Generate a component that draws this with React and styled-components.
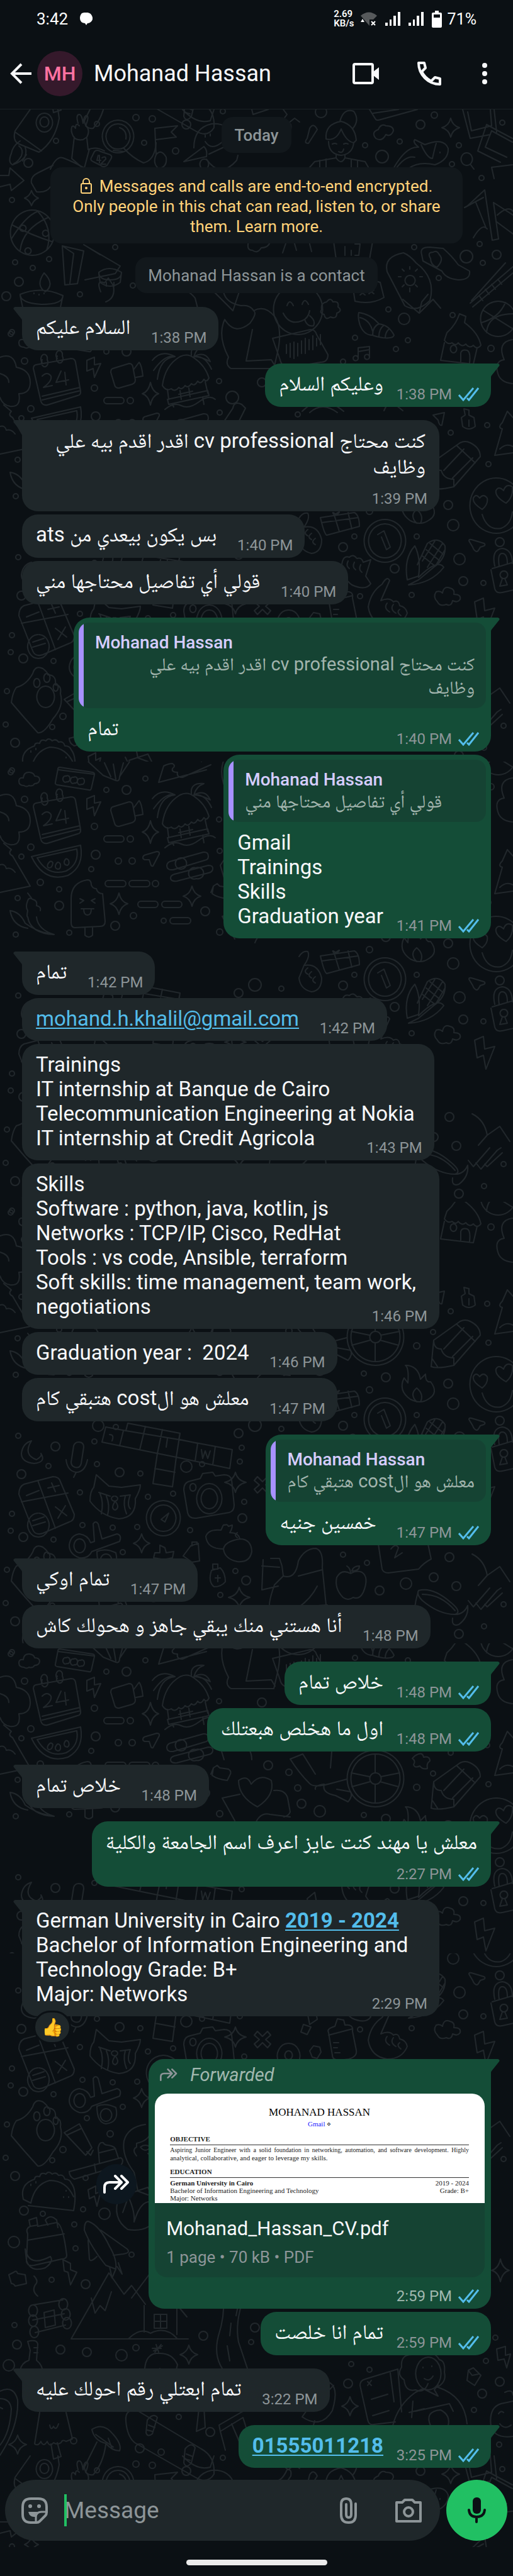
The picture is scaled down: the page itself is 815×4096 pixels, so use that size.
import React from "react";
import styled, { createGlobalStyle, css } from "styled-components";

const c = {
  bg: "#0b1014",
  line: "#21272b",
  incoming: "#1f272a",
  outgoing: "#144d37",
  quote: "#154333",
  text: "#f7f8fa",
  muted: "#8d9598",
  link: "#53bdeb",
  name: "#d6cdff",
  bar: "#a791ff",
  green: "#21c063",
  gold: "#ffd279",
};

const GlobalStyle = createGlobalStyle`
  * { box-sizing: border-box; }
  body { margin: 0; background: ${c.bg}; color: ${c.text}; }
  body, button, input {
    font-family: Roboto, "Noto Naskh Arabic", "Noto Sans Arabic", "DejaVu Sans", sans-serif;
  }
  button { border: 0; padding: 0; background: none; color: inherit; cursor: pointer; }
`;

/* ---------- page frame ---------- */

const Screen = styled.div`
  display: flex;
  flex-direction: column;
  min-height: 100vh;
`;

const StatusBar = styled.div`
  display: flex;
  align-items: center;
  height: 60px;
  padding: 0 58px;
  font-size: 25px;
  color: #fff;
`;

const Clock = styled.span`
  flex: 1;
  display: flex;
  align-items: center;
  gap: 18px;
  font-size: 26px;
`;

const NetSpeed = styled.span`
  font-size: 15px;
  line-height: 15px;
  font-weight: 600;
  margin-right: 10px;
`;

const StatusIcons = styled.span`
  display: flex;
  align-items: center;
  gap: 13px;
  margin-right: 9px;
`;

const Header = styled.header`
  display: flex;
  align-items: center;
  height: 114px;
  padding: 0 36px 0 16px;
  border-bottom: 1px solid #1b2225;
`;

const IconButton = styled.button`
  display: flex;
`;

const Avatar = styled.div`
  width: 72px;
  height: 72px;
  margin-left: 8px;
  border-radius: 50%;
  background: #35192b;
  color: #ff72a1;
  font-size: 32px;
  font-weight: 500;
  display: grid;
  place-items: center;
`;

const Title = styled.h1`
  flex: 1;
  margin: 0 0 0 18px;
  font-size: 36px;
  font-weight: 400;
`;

const HeaderActions = styled.div`
  display: flex;
  align-items: center;
  gap: 61px;
`;

const Chat = styled.main`
  position: relative;
  flex: 1;
  display: flex;
  flex-direction: column;
`;

const Backdrop = styled.svg`
  position: absolute;
  inset: 0;
  width: 100%;
  height: 100%;
`;

const Thread = styled.div`
  position: relative;
  flex: 1;
  display: flex;
  flex-direction: column;
  padding: 12px 35px 18px;
`;

/* ---------- notices ---------- */

const Notice = styled.p`
  align-self: center;
  margin: 0 0 22px;
  padding: 14px 20px 12px;
  border-radius: 18px;
  background: #12181c;
  color: ${c.muted};
  font-size: 26px;
  line-height: 31px;
  text-align: center;
  font-weight: ${(p) => (p.$strong ? 500 : 400)};
`;

const Encryption = styled(Notice)`
  align-self: stretch;
  margin: 1px 45px 22px;
  padding: 14px 28px 11px;
  line-height: 32px;
  color: ${c.gold};
  svg { vertical-align: -3px; margin-right: 12px; }
`;

/* ---------- messages ---------- */

const Row = styled.div`
  display: flex;
  align-items: center;
  gap: 19px;
  justify-content: ${(p) => (p.$out ? "flex-end" : "flex-start")};
  margin-top: ${(p) => (p.$first ? 21 : 5)}px;
  &:first-of-type { margin-top: 0; }
`;

const Bubble = styled.div`
  position: relative;
  max-width: 89%;
  border-radius: 25px;
  background: ${(p) => (p.$out ? c.outgoing : c.incoming)};
  ${(p) => p.$first && (p.$out ? css`border-top-right-radius: 0;` : css`border-top-left-radius: 0;`)}
  ${(p) => p.$wide && css`width: 73%;`}
`;

const TailSvg = styled.svg`
  position: absolute;
  top: 0;
  ${(p) => (p.$out ? css`right: -14px;` : css`left: -14px; transform: scaleX(-1);`)}
`;

const Content = styled.div`
  display: grid;
`;

const Text = styled.div`
  grid-area: 1 / 1;
  justify-self: start;
  padding: 13px ${(p) => (p.$roomy ? 31 : 22)}px 16px 22px;
  font-size: 33px;
  line-height: 39px;
  white-space: pre-wrap;
`;

const Arabic = styled(Text)`
  padding-top: 12px;
  padding-bottom: 17px;
  line-height: ${(p) => (p.$stack ? 41 : 40)}px;
`;

const Spacer = styled.span`
  display: inline-block;
  height: 1px;
  width: ${(p) => (p.$out ? 149 : 118)}px;
`;

const Stamp = styled.div`
  grid-area: ${(p) => (p.$stack ? "2 / 1" : "1 / 1")};
  place-self: end;
  display: flex;
  align-items: center;
  gap: 10px;
  padding: 0 19px 6px 0;
  font-size: 24px;
  line-height: 28px;
  color: ${(p) => (p.$bright ? "#a1b8af" : c.muted)};
`;

const QuoteWrap = styled.div`
  padding: 8px 8px 0;
`;

const Quote = styled.blockquote`
  margin: 0;
  display: flex;
  flex-direction: column;
  align-items: flex-start;
  padding: 15px 18px 14px 26px;
  border-radius: 16px;
  background: linear-gradient(to right, ${c.bar} 8px, ${c.quote} 8px);
  color: #a1b4ad;
  font-size: 29px;
  line-height: 37px;
`;

const QuoteName = styled.cite`
  font-style: normal;
  font-size: 28px;
  line-height: 33px;
  font-weight: 500;
  color: ${c.name};
`;

const QuoteText = styled.span`
  ${(p) => p.$long && css`padding-inline-end: 20px;`}
`;

const Link = styled.a`
  color: ${c.link};
  text-decoration: underline;
  text-decoration-thickness: 2px;
  text-underline-offset: 3px;
  font-weight: ${(p) => (p.$bold ? 700 : 400)};
`;

const Reaction = styled.div`
  position: relative;
  width: 60px;
  height: 53px;
  margin: -9px 0 3px 18px;
  border: 3px solid ${c.bg};
  border-radius: 27px;
  background: ${c.incoming};
  display: grid;
  place-items: center;
  font-size: 28px;
  line-height: 32px;
`;

/* ---------- document ---------- */

const Forwarded = styled.div`
  display: flex;
  align-items: center;
  gap: 20px;
  height: 55px;
  padding: 0 18px 5px;
  font-size: 29px;
  font-style: italic;
  color: #a1b8af;
`;

const DocCard = styled.div`
  margin: 0 10px;
  border-radius: 20px;
  overflow: hidden;
  background: ${c.quote};
`;

const Preview = styled.div`
  height: 174px;
  padding: 22px 25px 0 24px;
  background: #fff;
  color: #222;
  overflow: hidden;
  font-family: "Liberation Serif", serif;
  font-size: 11px;
  line-height: 12px;
`;

const PreviewName = styled.div`
  text-align: center;
  font-size: 17px;
  line-height: 16px;
  color: #000;
`;

const PreviewLink = styled.div`
  text-align: center;
  margin: 4px 0 12px;
  a { color: #1a1aff; text-decoration: none; }
`;

const PreviewHead = styled.div`
  font-weight: 700;
  line-height: 13px;
  padding-bottom: 2px;
  margin-bottom: 2px;
  border-bottom: 1px solid #333;
`;

const PreviewBody = styled.p`
  margin: 0 0 10px;
`;

const PreviewFullLine = styled.span`
  display: block;
  font-size: 10px;
  text-align-last: justify;
`;

const PreviewLine = styled.div`
  display: flex;
  justify-content: space-between;
`;

const DocInfo = styled.div`
  height: 118px;
  padding: 21px 18px 0;
`;

const FileName = styled.div`
  font-size: 31px;
  line-height: 39px;
`;

const FileMeta = styled.div`
  margin-top: 12px;
  font-size: 26px;
  line-height: 29px;
  color: ${c.muted};
`;

const DocStamp = styled(Content)`
  height: 50px;
`;

const ForwardButton = styled.button`
  width: 64px;
  height: 64px;
  border-radius: 50%;
  background: #0d171f;
  display: grid;
  place-items: center;
`;

/* ---------- composer ---------- */

const Composer = styled.form`
  position: relative;
  display: flex;
  gap: 10px;
  padding: 0 9px 10px 8px;
`;

const Field = styled.div`
  flex: 1;
  display: flex;
  align-items: center;
  height: 97px;
  padding: 0 29px 0 26px;
  border-radius: 49px;
  background: ${c.incoming};
`;

const InputWrap = styled.label`
  position: relative;
  flex: 1;
  display: flex;
  margin: 0 20px 0 26px;
  &::before {
    content: "";
    position: absolute;
    left: 0;
    top: -4px;
    width: 4px;
    height: 51px;
    background: ${c.green};
  }
`;

const Input = styled.input`
  width: 100%;
  height: 44px;
  padding: 0;
  border: 0;
  outline: 0;
  background: none;
  color: ${c.text};
  font-size: 37px;
  &::placeholder { color: ${c.muted}; opacity: 1; }
`;

const FieldIcons = styled.div`
  display: flex;
  align-items: center;
  gap: 61px;
`;

const MicButton = styled.button`
  width: 97px;
  height: 97px;
  border-radius: 50%;
  background: ${c.green};
  display: grid;
  place-items: center;
`;

const NavBar = styled.div`
  height: 46px;
  display: flex;
  justify-content: center;
  padding-top: 20px;
  &::after {
    content: "";
    width: 224px;
    height: 9px;
    border-radius: 5px;
    background: #ebebeb;
  }
`;

/* ---------- wallpaper ---------- */

const RINGS = [
  [17,17,4],[169,45,4],[201,45,7],[231,27,4],[39,60,5],[150,103,5],[49,136,5],[34,151,4],[152,148,7],[188,158,5],[210,158,5],[145,171,4],[64,192,5],[94,203,4],[247,194,5],[28,217,4],[94,229,7],[212,245,5],[183,261,7],[260,253,4],[326,238,7],[110,272,4],[25,275,4],[348,92,4],[207,123,5],[349,142,4],
  [662,229,5],[587,299,5],[613,279,7],[578,273,4],[712,289,7],[720,321,9],[794,348,7],[545,356,7],[563,339,4],[662,339,4],[447,361,4],[405,355,10],[379,368,7],[384,391,4],[156,356,9],[184,358,4],[29,372,4],[150,381,4],[88,389,7],[77,420,4],[34,433,7],[154,417,4],[190,430,7],[223,432,4],[296,421,9],[321,417,4],[381,413,4],[127,462,4],[19,496,4],[235,469,4],[275,464,4],[131,514,4],[179,518,4],[218,517,4],[37,533,7],[17,523,4],[85,537,4],[195,557,4],[302,522,4],[385,503,7],[388,477,4],[374,587,4],[391,602,7],[350,625,4],[11,585,4],[9,638,4],[545,561,4],[583,574,4],[603,618,7],[645,607,9],[689,597,7],[725,611,7],[714,565,7],[729,687,7],[769,675,4],[800,640,4],[688,207,4],[776,224,4],
  [369,118,10],[416,94,7],[629,41,4],[545,61,4],[473,145,4],[642,-7,9],[617,-22,4],[564,23,4],[719,-13,4],[648,27,4],[780,40,5],[774,162,4],[716,174,4],[627,390,7],[730,375,9],[736,410,7],[768,413,4],[572,434,4],[654,432,4],[426,194,7],[459,205,5],[473,230,5],[479,255,7],[508,267,9],[349,271,5],
  [100,625,5],[175,600,5],[138,575,4],[83,642,4],[24,667,7],[136,670,4],[38,722,7],[166,727,9],[132,720,4],[68,727,4],[118,744,4],[22,772,9],[120,782,4],[209,792,4],[82,832,4],[136,839,7],
  [96,943,7],[138,947,7],[193,952,9],[216,940,5],[27,935,7],[14,968,9],[23,904,4],[323,921,7],[399,931,4],[405,908,7],[284,1050,4],[334,1074,7],[222,1100,7],[117,1088,5],[256,1106,5],[354,1115,4],[553,997,7],[558,966,4],[587,975,4],[766,1013,7],[753,1039,4],[772,961,4],[794,994,7],[793,1094,4],[787,924,4],
  [216,-327,5],[242,-325,5],[296,-316,7],[154,-317,4],[89,-290,4],[229,-287,4],[279,-274,5],[690,-331,5],[668,-316,7],[580,-283,4],[635,-289,4],[607,-265,10],[729,-283,4],[798,-319,4],[718,-253,4],[45,-255,7],[765,-231,4],[19,-196,4],[78,-102,4],[24,-97,4],[52,-88,4],[30,-66,7],[10,-43,7],[127,-46,4],[183,-121,4],[658,-121,4],[789,-109,7],[741,-106,10],[767,-96,4],[762,-126,4],[697,-72,4],[211,-60,4],[19,14,4],[510,-336,9],
];

const STARS = [
  [239,112,13,18],[189,226,14,17],[305,214,14,16],[374,446,17,16],[225,543,13,15],[380,629,17,16],[795,817,14,18],[300,951,14,15],[28,1094,14,15],[556,1033,13,15],[716,-311,14,15],[50,-199,11,12],
];

const BARS = [
  [165,118,32,10],[167,189,33,10],[205,189,33,10],[219,222,32,10],[257,222,32,10],[270,248,33,10],
];

/* each entry: x, y, path drawn from that corner */
const SHAPES = [
  [53,52,"M4 14L60 4Q66 4 67 10L75 56Q76 62 70 63L22 78Q14 79 12 72L0 20Q0 15 4 14ZM14 64L74 50M14 70L75 55M14 6a5 7 0 1 0 8 0a5 7 0 1 0-8 4M38 0a5 7 0 1 0 8 0a5 7 0 1 0-8 4M14 32q8-8 14 0q2 8-12 18l14-3M44 24L36 42L56 38M50 26L52 46"],
  [136,54,"M2 5L14 0L14 12L24 10L14 32L12 18L2 22Z"],
  [175,62,"M4 10L30 2Q35 2 36 7L40 28Q40 33 35 35L14 41Q8 41 7 36L1 16Q1 11 4 10ZM37 12L46 0Q50 4 52 22L41 24"],
  [242,33,"M16 66Q20 34 44 20Q56 14 66 22Q84 34 90 54q-4 8-8 2q-5 9-10 3q-5 9-10 4q-5 8-10 3q-5 8-10 3q-6 8-12 2q-8 5-14-5ZM24 72L26 88M84 60L88 78M24 88L88 74L90 82L26 96ZM32 96L34 100M80 84L82 96M20 104Q34 92 46 98T74 92T100 88M44 74L46 88M58 70L60 84M42 80L64 75M0 26Q14 8 36 20Q20 16 2 42M62 18Q60 0 82 2Q70 6 66 20Q84 10 92 28Q78 20 66 20Q84 18 94 40M36 20Q12 22 8 56"],
  [50,133,"M0 18L78 0Q84 34 58 48Q20 60 0 18ZM9 20L72 6Q76 30 55 41Q26 50 9 20M26 30q5-8 8-2q-1 8-6 8q-4-1-2-6M38 32q4-9 8-2q1 8-4 8q-5-1-4-6M52 26q3-8 7-2q2 6-2 8q-6-1-5-6"],
  [227,143,"M0 10Q0 6 5 5L22 0Q27 0 26 4L16 23Q13 24 12 19L10 13L3 13Q0 12 0 10Z"],
  [265,143,"M8 15L58 1Q66 0 66 8Q66 13 60 14L10 29Q0 30 0 22Q1 16 8 15ZM12 36L66 22Q74 22 73 28Q72 33 66 34L16 47Q6 48 6 42Q6 38 12 36ZM22 10a9 9 0 1 0 1 18a9 9 0 1 0-1-18M46 26a9 9 0 1 0 1 17a9 9 0 1 0-1-17"],
  [113,188,"M0 30Q0 4 26 0Q32 0 32 8Q34 14 40 14Q42 22 50 22L54 66Q54 74 46 74L6 76Q0 76 0 68ZM22 76L22 88Q28 94 34 88L34 75M14 30l6 3l-6 4M38 30l-6 3l6 4M16 46h20M20 46q0 10 6 10t6-10"],
  [16,207,"M28 14Q30 8 36 12Q44 14 42 22Q50 24 48 30M28 14Q24 24 28 30Q26 40 28 40Q32 66 70 68Q44 60 42 40M28 2l6 8M0 30Q16 32 24 50Q40 62 60 66M0 30Q4 54 28 58"],
  [30,16,"M8 22Q0 22 0 15Q0 9 7 10Q8 0 17 1Q24 2 25 7Q33 7 33 13Q32 19 25 19Q22 24 16 22Q12 25 8 22Z"],
  [87,9,"M8 0L60 8Q64 9 63 12L58 34Q57 37 54 36L4 28Q0 27 1 24L5 3Q5 0 8 0ZM2 24M6 4L62 11M18 14a4 5 0 1 0 1 9a4 5 0 1 0-1-9M30 16a4 5 0 1 0 1 9a4 5 0 1 0-1-9M41 18a4 5 0 1 0 1 9a4 5 0 1 0-1-9"],
  [252,3,"M0 30L8 4Q16 0 22 0q6 4 0 8q-2 6 8 6q-2 8 8 8L83 2M0 30L76 10"],
  [140,0,"M0 0L24 22L44 30Q50 32 50 24L66 0M40 4L44 28M56 2L50 24M26 2L36 24"],
  [0,50,"M0 4Q22-4 26 20Q48 24 48 44Q48 62 30 62Q34 84 16 82Q4 80 0 68M0 30Q14 34 14 44"],
  [0,130,"M6 0L18 10Q12 16 20 20L48 68L0 78M0 34Q8 32 10 40Q18 38 24 46"],
  [162,352,"M41 0L124 16L122 26L207 42L203 72L118 54L112 101L81 96L88 48L0 30L6 6L38 12ZM69 5L60 42M96 10L88 48L118 54L124 16M34 12L28 36M124 26L152 32L148 60M180 37L176 66M38 12L122 26M84 72L116 78M12 18q8 0 4 10M104 24l-2 14M158 42l2 14l4-12l4 12l4-12"],
  [34,380,"M16 0Q2 22 24 30Q34 24 31 20Q40 34 20 36Q0 34 0 20Q2 4 16 0Z"],
  [105,382,"M12 6Q14 0 20 0Q28 0 28 8L24 34Q22 42 14 40Q8 38 8 32ZM0 28Q2 46 16 48Q30 48 34 28M16 48L12 56"],
  [30,437,"M8 12L54 0Q64 0 66 8L88 60Q88 70 80 72L38 90Q26 94 22 84L0 28Q0 16 8 12ZM30 6L58 82M4 40L78 26M12 30L32 22M46 18L64 14M52 10L58 24M58 48L76 62M74 46L62 66M30 58a17 19 0 1 0 2 0M22 70L40 64M22 78L42 72"],
  [143,434,"M10 0L30 18L50 20L80 16Q80 24 72 38Q74 68 46 70Q18 66 0 42Q0 26 6 20ZM14 28L32 34M48 34L64 32M16 30q6 14 2 32M26 34q6 14 2 30M56 34q-4 14 2 28M64 32q-6 16 0 22M38 34a5 4 0 1 0 2 0M40 42q-8 12 0 14q8-4 0-14"],
  [232,475,"M27 0a27 28 0 1 0 1 0M27 7a20 21 0 1 0 1 0M24 30L36 20L30 34Z"],
  [292,430,"M10 14L26 10L30 2L46 0L50 6L64 4Q74 4 76 12L80 52Q80 62 72 64L20 73Q8 74 6 64L0 28Q0 16 10 14ZM40 18a20 24 0 1 0 1 0M40 26a13 16 0 1 0 1 0M14 18a5 6 0 1 0 1 0"],
  [108,508,"M40 4Q44-2 48 4L54 28L78 20Q86 22 82 32L38 48Q32 60 18 58Q2 52 2 38Q4 22 18 20Q32 22 36 34L42 32ZM18 28a9 11 0 1 0 1 0M46 48Q60 42 76 50Q82 74 60 76Q46 74 46 48M60 52a9 10 0 1 0 1 0"],
  [327,508,"M26 10q2-6 4-4q4-2 6 2l6-2q0 6-4 12Q52 18 54 28Q72 28 73 48Q70 66 50 64Q30 60 28 44Q2 44 0 24Q4 12 24 14ZM50 26q-6-4 0-8M28 44Q30 32 54 28"],
  [332,576,"M6 0h8v8h-8ZM4 10L18 6Q26 14 26 28Q20 36 8 36Q-2 28 4 10M14 18v10M10 22h8"],
  [291,541,"M12 6L24 2L26 30L14 32L0 22ZM14 6v-6h8v4"],
  [244,546,"M10 0L18 4L20 12L32 10L30 20L20 22L24 32L14 34L12 22L0 20L2 12L10 12Z"],
  [414,551,"M16 16h14l4 12L36 44Q56 50 60 20Q70 0 88 0Q100 4 98 30L104 90M2 28L30 30M36 44L22 58Q10 92 16 96M60 44L98 34M4 18L2 66L28 60M90 60Q80 80 60 94M16 96L106 90"],
  [533,579,"M24 12Q10 4 2 18Q-2 36 12 50Q20 56 28 50Q38 54 44 42Q54 18 42 10Q34 6 24 12ZM24 12Q24 4 18 0M26 8Q28 0 38 0Q38 8 26 8"],
  [657,616,"M8 2Q30-4 58 20Q78 36 66 40Q40 40 14 18Q4 8 8 2ZM8 2Q-4 40 8 52M66 40Q80 40 86 26Q88 44 72 56Q60 60 62 46M14 8Q44 8 66 34M22 52v1"],
  [744,612,"M0 22L8 32L34 2M12 26L20 36L46 6L52 2M26 28L30 32L54 10"],
  [638,260,"M14 54Q-6 40 4 20L10 28Q12 4 6 0Q26 0 30 22L38 14Q38 28 46 26Q60 44 42 54Q30 62 14 54ZM24 58Q12 46 24 36Q36 46 30 58"],
  [685,188,"M4 32L46 2Q54-2 62 2Q78 10 78 24L36 72Q10 78 0 74ZM4 32q0 14 12 14q4 14 20 14v12M40 6L70 34M20 46L52 12M34 58L66 26M2 62l8 12"],
  [746,246,"M42 0a42 44 0 1 0 1 0M20 50Q4 40 6 32Q10 24 16 32Q22 24 28 32Q30 42 20 50M58 40Q40 30 42 20Q46 12 54 20Q58 8 68 14Q70 30 58 40M20 58Q28 84 50 80Q66 74 68 54"],
  [578,312,"M33 0a33 34 0 1 0 1 0M33 7a26 27 0 1 0 1 0M22 24L32 18L42 44L36 48L28 28"],
  [645,344,"M2 64Q-4 30 14 10Q24 30 20 58ZM18 40L34 6Q52-6 62 10Q64 30 44 44L20 64L4 72M38 6L60 24M32 16L54 34M26 26L46 42M46 2L26 34M58 6L34 44M62 16L48 40M20 60Q50 30 60 44Q40 70 4 72"],
  [745,344,"M0 2Q0-1 4 0L24 6Q27 8 24 10L18 12Q14 20 12 19Q8 18 6 12Z"],
  [780,358,"M6 28Q0 2 18 0Q34 2 34 24M13 28Q10 8 18 8Q26 8 26 24M2 32L36 22M0 34L6 64Q8 72 18 70L36 66M20 36a6 6 0 1 0 1 0M18 48L14 60L26 58L22 48"],
  [700,-15,"M10 30Q24 18 30 0L40 4L38 14Q60 30 64 50q-6 8-12 0q-6 6-12-2q-6 6-12-2q-4 6-10 0q-6 4-12-4ZM6 46L0 74L52 80L58 54M20 50a5 6 0 1 0 1 0M32 76V62Q34 56 42 58Q48 60 46 78"],
  [433,10,"M0 14L60 0Q68 0 70 8L88 40Q88 52 76 52L30 60Q14 60 12 48ZM22 24v14M28 22v22M34 20v26M40 22v20M46 18v20M52 14v24M58 16v16M64 10v22M70 14v12M76 8v16"],
  [563,37,"M6 18V2L24 0V16M6 8L24 5M6 18a4 4 0 1 0-2 4a4 4 0 0 0 2-4M24 16a4 4 0 1 0-2 4a4 4 0 0 0 2-4"],
  [568,-17,"M2 0Q20 2 34 18Q50 20 58 36Q56 42 40 40Q28 38 24 36Q10 36 4 20Q0 8 2 0ZM34 18q-10 4-10 18M42 20q-8 6-8 18M50 26q-6 6-6 14M4 8Q20 12 24 30"],
  [763,-35,"M28 0a28 28 0 1 0 1 0M4 14L52 44M2 34Q30 26 40 2M10 50Q12 20 52 20"],
  [434,-62,"M39 0a39 40 0 1 0 1 0M22 34q4-12 10 0M46 32q4-12 10 0M16 46Q26 66 46 58Q56 54 58 42M50 56q4 12 14 10q4-8-6-16"],
  [353,-50,"M2 0Q6 18 30 22Q44 20 50 30Q68 20 84 40Q96 60 88 96L82 122L14 122Q4 116 10 104Q-8 70 4 44M4 44Q20 70 44 50Q56 34 50 30M48 60L38 110L78 108L84 118"],
  [731,136,"M6 0L14 2L14 10L22 14L24 28Q14 36 4 28L2 14L8 10ZM14 18v10"],
  [786,140,"M0 70L12 28Q4 26 12 18L20 0L29 10M0 70L29 66M8 60Q18 50 29 56"],
  [785,20,"M6 60Q0 40 16 38Q4 10 29 6M6 60Q10 74 29 76"],
  [688,142,"M0 4L18 0L14 20Q10 22 8 12Z"],
  [509,301,"M0 8L54 0Q62 4 62 22L10 36Q6 34 0 8ZM22 4L30 30M44 0L50 26M2 16L60 8M26 4q-10-8-4 0q14-10 4 0"],
  [545,300,"M-70 10Q-64 0-56 2Q-52 10-62 24M-62 24Q-40 20-34 44Q-34 64-50 66Q-68 62-70 44ZM-56 28q-8 6 0 10M-50 34q-8 6 0 10M-44 42q-8 6 0 10"],
  [541,368,"M2 16Q4 0 14 4Q20-2 26 6Q34 4 36 12L48 8L40 34L48 46Q40 58 18 48Q2 36 2 16ZM12 10q-4 8 2 12M22 12q-4 8 2 12M32 16q-4 8 2 12"],
  [585,405,"M22 10Q30-4 34 4L20 36Q34 30 40 38Q48 34 50 44Q60 46 62 56Q54 76 30 76Q4 72 0 46Q4 22 22 10ZM30 40q-6 8 4 14M40 42q-6 8 4 14M50 50q-6 4 2 10"],
  [689,419,"M6 24Q-2 16 4 8Q10 6 14 10Q16-2 26 2Q34 4 32 12Q44 12 42 20Q38 26 30 22Q28 32 20 28Q10 32 6 24Z"],
  [754,437,"M0 6L14 0L16 20L32 16L18 52L14 30L4 34Z"],
  [551,170,"M45 0a45 45 0 1 0 1 0M45 6a39 39 0 1 0 1 0M45 36a9 9 0 1 0 1 0M45 7V36M45 54V84M7 36L36 42M8 58L37 50M84 36L54 42M82 58L53 50"],
  [461,172,"M0 12Q14 34 30 50Q36 58 60 52L90 44M0 12L20 4L40 36M66 0L64 26M54 52Q50 66 72 70L92 80Q100 70 96 64L74 60M40 60Q38 54 54 52"],
  [353,212,"M26 6Q40-4 46 12Q60-6 78 6Q84 30 56 48Q26 32 26 6ZM28 28L0 34L20 70M82 22Q100 20 104 34L108 56Q106 62 98 64M52 76Q60 56 76 60L108 64"],
  [335,192,"M4 6L10 2L14 6L28 8Q34 12 30 18L26 26Q10 24 2 18ZM4 6L0 16"],
  [653,175,"M6 4Q18-4 20 6Q30 4 30 12Q24 16 26 24Q18 26 14 20Q6 24 4 18Q8 12 2 8Z"],
  [18,549,"M8 30Q24 26 34 8Q38-6 50 0Q58 6 58 10Q72 10 70 26Q80 26 78 40Q84 60 66 80Q52 104 42 102Q20 78 0 54Q2 38 8 30ZM54 28a14 17 0 1 0 1 0M40 16a5 7 0 1 0 1 0M56 8a5 7 0 1 0 1 0M70 24a4 6 0 1 0 1 0"],
  [102,584,"M0 14L24 0L44 38L34 50ZM4 18L26 8M36 44L42 50L46 42"],
  [110,612,"M0 48L82 26Q88 30 82 38L8 60Q0 56 0 48ZM48 34L46 10Q48 0 54 2Q56 6 62 6Q74 8 74 14L78 26M48 18L72 12M40 36L42 48"],
  [195,585,"M36 0Q8 4 2 26Q-2 50 18 76L24 106L40 112M22 50Q14 40 22 36L22 30Q40 26 44 14Q52 26 62 24M28 36Q36 30 44 36Q36 46 28 36M44 36h14M40 46q8 8 16 2M10 110L40 100L60 140M0 140L10 112"],
  [35,660,"M2 44Q-4 20 20 12q0-6 8-4q2-8 10-4q4-6 10 0q6-4 10 2q8-2 10 6q8 0 10 6Q88 30 82 62L10 54M2 44L14 50Q20 20 44 14Q70 14 82 40M14 20v2M22 16v2M70 30v1M66 40v1M74 40v1"],
  [140,683,"M0 6L12 0L12 12L20 8L14 32L10 16L2 20Z"],
  [185,690,"M4 10Q-8 44 18 62Q50 68 70 40M14 0Q30 30 28 50Q40 10 60 20"],
  [40,733,"M6 4L18 0L20 14L50 8Q60 10 66 60Q66 66 58 66L14 76Q4 78 2 70L4 26Q0 18 8 14ZM6 4L8 14L20 12M36 12L32 4Q40-6 50 4L52 16M4 36L62 26M0 50Q6 80 40 62Q46 70 32 80Q8 88 2 68Z"],
  [134,739,"M6 0Q24 6 40 40Q52 60 50 76L34 70Q10 40 0 14Q0 0 6 0ZM26 14L68 44Q74 50 62 52L46 54M6 30L8 60Q10 66 20 56M40 72L44 90L50 76M52 72L60 84L54 66"],
  [14,818,"M0 6L8 2Q12-2 14 4L26 6L28 20L10 24Q8 20 4 20Z"],
  [98,800,"M2 0L14 6L14 16L24 20L14 40L10 20L4 18Z"],
  [52,826,"M2 0q8 8 2 14q-6 10 4 18"],
  [440,456,"M18 0a18 20 0 1 0 1 0M18 12a6 7 0 1 0 1 0"],
  [492,460,"M6 0L16 2L18 10L12 20L4 18L0 8Z"],
  [518,423,"M4 16Q0 10 14 6L18-6L28-4L30 4Q44 2 42 14L48 44Q50 54 36 58L22 60Q10 60 10 52ZM4 20L42 10M12 32h8M12 40h6M14 48h8"],
  [403,437,"M6 0L14 8L22 0L27 6L19 13L27 20L22 26L14 18L6 26L1 20L9 13L1 6Z"],
  [476,426,"M6 0L18 4L12 16L2 12ZM12-20L24-30L28-8L16 0Z"],
  [44,868,"M8 4L56-4M8 28L58 18M12 48L60 36M8 4a7 9 0 1 0 1 0M8 20a7 9 0 1 0 1 0M10 38a7 9 0 1 0 1 0M56-6a7 9 0 1 0 1 0M60 10a7 9 0 1 0 1 0M62 24a7 9 0 1 0 1 0M26 16L42 12L44 36L28 40Z"],
  [113,861,"M0 65L60-40L84-6L96-20L118 10M32 0L38 24L46 12L54 20L64-10M0 65H186M92 64Q110 46 126 56Q150 44 168 64M96 0L126-40L184 30M116 12V54M168 12V58M132 26h20v22h-20ZM142 26v22M132 37h20"],
  [343,861,"M12 0Q14 30 4 60Q-4 90 10 112M44 0Q30 40 36 70L50 112M36 8L32 28M24 40L22 60M18 76L22 100"],
  [230,933,"M0 40Q2 18 18 16L24 16Q44 16 52 34L50 42L2 50ZM12 8L26 8M18 2L22 14M26 2L16 14M14 12L28 4M24 40L28 54"],
  [32,930,"M12 0Q26-4 28 4L26 30Q36 38 36 50L0 46Q2 34 14 30L16 14ZM28 10h-6M28 18h-6"],
  [55,1043,"M8 0L0 50q6 4 10-4q4 10 10 0q4 10 10 2q6 4 12 0q2-6 8-2l10-4L50 0M24 20q2 10 6 2q4 8 8-4M26 50L30 74L42 70L36 48"],
  [134,1064,"M12 6Q30-6 46 14Q60 30 56 40Q44 40 34 28Q16 24 12 6ZM18 14L46 34M20 26L0 66Q2 80 14 78Q30 60 34 30M38 20L44 36"],
  [200,1041,"M0 16Q-2-6 20 0L120 60Q142 72 140 100Q130 116 112 106L14 50Q2 40 0 16ZM34 14Q44 2 50 10L42 36Q34 42 32 34ZM94 60Q104 48 110 58L104 82Q96 92 92 82ZM36 22l10 4M34 30l8 2M96 68l10 4M94 76l8 2"],
  [340,1043,"M60-10L8 20L10 30L46 8L56 40M28 18L46 60M10 30L18 60M-24-6L-28 30L-14 24L-16-8"],
  [572,982,"M0 18Q0 10 8 8L60-8L66 60M0 18L12 72Q14 82 22 80L56 76M12 12l6 6M18 10l-6 8M18 40L44 32M20 66L46 58M48-2L54 44"],
  [624,951,"M30 0Q12 0 14 20Q6 32 18 40Q20 60 36 56Q50 62 56 46M30 0Q60-14 74 8Q84 10 82 28Q86 44 70 52M56 4a20 26 0 1 0 1 0M48 20v1M62 18v1M50 38q8 6 14-4M36 60Q8 80 0 113M72 48L66 56L72 66L48 54L36 60M72 52Q114 66 118 110M32 74L30 100M36 90L90 78L96 90M60 113Q50 90 76 88Q92 96 88 113M26 92L50 86"],
  [789,938,"M0 4L14 0L14 14L22 12L16 34L12 20L2 22Z"],
  [740,972,"M4 4L12 0L24 12L14 28L2 20ZM4 4L10 12L20 10"],
  [772,1005,"M30 6Q42 0 43 10M24 24Q4 30 8 60Q14 80 43 76M24 24L43 20M20 40q4-6 8-2M38 40M22 56q8 10 18 2"],
  [0,1005,"M0 4Q22-6 28 18Q30 60 0 106M0 16Q16 16 18 32Q16 70 0 90M0 30l4 2"],
  [480,1000,"M0 50L40-6Q60 0 48 40Q30 70 0 50M10 40L50 0M20 56L16 70"],
  [22,-340,"M26 0L2 34Q-2 48 6 54L40 68Q66 50 72 14L70 0M48 6a13 15 0 1 0 1 0M48 12a7 8 0 1 0 1 0M2 36L44 66"],
  [14,-290,"M18 0Q6 8 4 20Q-2 34 6 38Q20 34 28 22M16 8Q24 14 20 24Q14 34 8 36M26 10Q30 20 22 32"],
  [112,-332,"M12 14Q8 0 14 0Q18 0 20 14Q22 0 26 2Q30 4 24 18Q32 24 26 36L20 40Q8 42 4 34Q0 26 2 20Q4 16 8 22Q8 12 14 18M6 36L2 70L20 86M26 38L28 56Q40 50 54 58"],
  [162,-323,"M25 0a25 26 0 1 0 1 0M25 6a19 20 0 1 0 1 0M28 12Q40 16 38 30"],
  [144,-275,"M6 2Q10-2 16 2L28 6Q36 8 32 14L26 24Q20 28 16 24L4 18Q-2 16 2 10ZM12 8l-2 8l6 0M14 8v12M18 12q6-4 6 2l-8 8l8 0"],
  [80,-263,"M0 18Q10-4 20 0Q36 6 54 16L62-14M116-16Q130 0 148 8Q166 4 168-24M100-12L116-10"],
  [246,-314,"M2 46L0 4L36 0L26 10L34 18L2 22M2 46Q-4 60 6 68Q20 66 18 50Q10 36 2 46"],
  [300,-319,"M8 40Q8 8 36 2Q64 0 72 24M26 20v3M34 18v3M26 30Q36 46 54 30M-8 62L24 38Q30 44 28 54L-8 62M24 58a7 8 0 1 0 1 0M28 58Q50 90 76 60L78 52M32 50L62 36"],
  [490,-317,"M28 24Q26 0 52-4Q74 2 76 26L72 30Q60 28 52 8Q44 28 28 24ZM32 28Q32 48 52 50Q70 48 72 30M50-4Q56-26 72-20Q82-6 70 8M38 32q4-2 7 0M56 32q4-2 7 0M48 44q6 4 8-4M44 50L44 54Q52 66 58 54L58 50M44 54L10 60L-6 78M58 54L90 60L98 74M18 58V76M28 56V76M68 56V76M78 58V76"],
  [432,-300,"M6 0Q16 0 24-18Q32-20 30-8L18 10ZM60-10Q66-20 72-8L58 14Q50 14 56 6Z"],
  [593,-316,"M4 22Q-4 12 8 8Q12-2 20 2Q32 2 32 10Q28 20 20 16Q14 28 4 22Z"],
  [625,-292,"M0 46Q20 10 40 12Q30 4 34 0L50 8Q80-4 87 14Q88 32 66 40Q40 34 24 46M44 8Q54 30 62 30Q66 12 68 6M74 20v1M4 46Q20 24 34 28"],
  [735,-340,"M0 0L12 46L44 40M8 4L14 34L46 26L44 0M50 0L54 36M38 24L60 36L79 46M38 24L24 66L60 84M46 34L36 60L70 76M46 34L79 52M46 92L79 88M46 92L50 110"],
  [731,-271,"M10 0a9 10 0 1 0 1 0M16 18L22 26"],
  [587,-340,"M0 0L10 16Q12 18 18 16L76 0M6 6L46 0"],
  [290,-340,"M0 0Q22 24 44 18L50 0M110 0L112 8L136 0M160 0l6 8l-6 8l8 6l10-8l8 6M60 0"],
  [16,-180,"M35 0a35 36 0 1 0 1 0M4 24Q34 40 66 50M2 46Q24 10 44 2M16 64Q20 30 60 12M44 2Q70 30 58 64M20 24a5 5 0 1 0 1 0M56 32a5 5 0 1 0 1 0M28 60a5 5 0 1 0 1 0"],
  [0,-247,"M0 12L14 12L16 0L38 20L18 36L16 26L0 30M50 24Q48 14 60 8L84-4M50 24L58 38Q74 40 80 30"],
  [99,-125,"M0 2L34 10L24 62L4 64ZM0 2L18 14L12 62M34 0L92 34L84 46L36 56M34 0L60 16"],
  [157,-89,"M0 8Q16-4 36 8Q36 20 18 20Q0 20 0 8ZM0 10L2 24Q18 36 34 24L36 8M12 24v6M24 24v6"],
  [32,-80,"M38 0Q24 20 40 30Q56 18 38 0M0 34Q34 20 68 36Q68 50 34 50Q0 48 0 34ZM22 32v1M30 34v1M38 32v1M0 36L6 64Q34 80 62 64L68 36M128 30Q120 10 134 16L140 8L148 20Q152 40 136 46"],
  [613,-112,"M28 0Q-4 6 2 30L30 84Q50 96 70 76Q80 40 48 16Q38 4 28 0M38 36a8 8 0 1 0 1 0M38 22v4M38 56v6M20 38h4M54 38h4M26 26l3 3M50 26l-3 3M26 54l3-3M50 54l-3-3"],
  [668,-127,"M2 18Q-2 6 14 6L36 8Q50 20 60 34L78 44Q80 58 60 58Q40 56 34 44L4 28ZM16 24Q10 14 20 14Q26 10 30 18Q38 26 26 38Q16 34 16 24"],
  [747,-100,"M0 68L68 10M4 74L68 20M2 64L56 4M14 56l6 8M24 46l6 8M34 38l6 8M44 30l6 8"],
  [738,-212,"M4 26L32 0L44 80L54 78L46 20L77 40M0 28L30 12M18 20L34 60M50 50L77 70M14 76Q28 52 36 62M52 40Q70 24 77 34"],
  [530,-130,"M0 0L4 28L56 34L62 0M18 8v14M28 14v8M34 4h8l-2 18h-6"],
  [395,-130,"M0 0Q-4 14 6 14Q14 20 20 10Q32 10 34 0M60 0L54 18M72 0L76 14M96 0L100 16"],
  [560,-65,"M0 4Q22-8 44 0L50 24Q30 36 4 30ZM12 14l8 6M20 14l-8 6M26 12l8 6M34 12l-8 6"],
  [250,-60,"M0 10Q40-6 60 20L70 60M110-20L90 10L120 40M120 40L130 10L96-30"],
  [505,-44,"M14 10q6-8 10 0q10-2 8 8q8 6-2 10q0 10-10 6q-8 6-10-4q-8-2-4-8q-2-10 8-12Z"],
  [640,-50,"M0 12L26 34L48 12L60 26M26 34L30 16L40 4"],
  [350,145,"M0 20L20-10Q22-22 34-16L40-10L30 10Q50 20 50 40M12 10L40 24M0 20L6 40"],
  [480,120,"M0 20Q30-10 66 20M12 22Q32 4 56 22M64 10L72-4L84 8"],
  [610,115,"M0 24L10 4L20 16L30 24M56 10Q52-6 40 0"],
  [593,544,"M8 0L78-10Q84-10 86-4L92 24Q80 30 72 40L24 46Q16 46 14 40ZM28 8Q36-2 40 6L34 22L46 14"],
  [750,560,"M0 0Q20 10 24 34L10 50M24 34L44 20L60 44"],
];

const star = ([x, y, w, h]) =>
  `M${x} ${y - h}Q${x + 3} ${y - 3} ${x + w} ${y}Q${x + 3} ${y + 3} ${x} ${y + h}Q${x - 3} ${y + 3} ${x - w} ${y}Q${x - 3} ${y - 3} ${x} ${y - h}Z`;

const TILE = 1452;
/* top, height, and where the tile starts, for each stretch of the wallpaper */
const BANDS = [
  [0, 1037, 340],
  [1037, 700, 1037],
  [1737, 702, 1737],
  [2439, 493, 2439],
  [2932, 944, 2619],
];

const Wallpaper = () => (
  <Backdrop aria-hidden="true">
    <defs>
      <g id="doodles" fill="none" stroke={c.line} strokeWidth="2" strokeLinecap="round" strokeLinejoin="round">
        {RINGS.map(([x, y, r], i) => <circle key={i} cx={x} cy={y} r={r} />)}
        {STARS.map((s, i) => <path key={i} d={star(s)} />)}
        {BARS.map(([x, y, w, h], i) => <rect key={i} x={x} y={y} width={w} height={h} rx="5" />)}
        {SHAPES.map(([x, y, d], i) => <path key={i} d={d} transform={`translate(${x} ${y})`} />)}
      </g>
      {BANDS.map(([, , origin], i) => (
        <pattern key={i} id={`band${i}`} patternUnits="userSpaceOnUse" x="0" y={origin} width="815" height={TILE}>
          <use href="#doodles" />
          <use href="#doodles" y={TILE} />
        </pattern>
      ))}
    </defs>
    {BANDS.map(([y, h], i) => <rect key={i} y={y} width="100%" height={h} fill={`url(#band${i})`} />)}
  </Backdrop>
);

/* ---------- icons ---------- */

const Svg = ({ w, h, box, children, ...rest }) => (
  <svg width={w} height={h} viewBox={box || `0 0 ${w} ${h}`} fill="none" aria-hidden="true" {...rest}>{children}</svg>
);

const Ticks = () => (
  <Svg w={33} h={22} stroke={c.link} strokeWidth="3">
    <path d="M1 12L8 20L24 1M14 17L17 20L32 1" />
  </Svg>
);

const ForwardIcon = ({ w, h, color }) => (
  <Svg w={w} h={h} box="0 0 42 30" stroke={color} strokeWidth="4" strokeLinecap="round" strokeLinejoin="round">
    <path d="M2 28V20Q2 12 10 12H28M19 2L29 12L19 22M29 2L39 12L29 22" />
  </Svg>
);

const Signal = () => (
  <Svg w={24} h={22}>
    <path fill="#fff" d="M0 17h4v5H0zM7 12h3v10H7zM13 6h4v16h-4zM20 0h4v22h-4z" />
  </Svg>
);

const Tail = ({ out }) => (
  <TailSvg $out={out} width="15" height="22" viewBox="0 0 15 22" aria-hidden="true">
    <path d="M0 0H12Q16 1 14 4L2 19Q1 20 1 22H0Z" fill={out ? c.outgoing : c.incoming} />
  </TailSvg>
);

/* ---------- message parts ---------- */

const TimeStamp = ({ time, out, ...rest }) => (
  <Stamp {...rest}>
    <time>{time}</time>
    {out && <Ticks />}
  </Stamp>
);

const Message = ({ out, first, quote, longQuote, arabic, stack, roomy, time, children }) => {
  const Body = arabic ? Arabic : Text;
  return (
    <Row $out={out} $first={first}>
      <Bubble $out={out} $first={first}>
        {first && <Tail out={out} />}
        {quote && (
          <QuoteWrap>
            <Quote>
              <QuoteName>Mohanad Hassan</QuoteName>
              <QuoteText dir="rtl" $long={longQuote}>{quote}</QuoteText>
            </Quote>
          </QuoteWrap>
        )}
        <Content>
          <Body $roomy={roomy} $stack={stack} dir={stack ? "rtl" : undefined}>
            {arabic && !stack ? <span dir="rtl">{children}</span> : children}
            {!stack && !roomy && <Spacer $out={out} />}
          </Body>
          <TimeStamp time={time} out={out} $stack={stack} />
        </Content>
      </Bubble>
    </Row>
  );
};

export default function App() {
  return (
    <Screen>
      <GlobalStyle />
      <StatusBar>
        <Clock>
          3:42
          <Svg w={21} h={20}><path fill="#fff" d="M4 1Q12-2 18 2Q23 8 20 13Q17 17 13 17L11 20L9 17Q1 16 1 9Q1 4 4 1Z" /></Svg>
        </Clock>
        <NetSpeed>2.69<br />KB/s</NetSpeed>
        <StatusIcons>
          <Svg w={26} h={22}>
            <path fill="#56595b" d="M0 6Q13-5 26 6L20 12H14V22Z" />
            <path fill="#fff" d="M0 16L3 11L6 16Z" />
            <path stroke="#fff" strokeWidth="2" d="M17 15l6 6M23 15l-6 6" />
          </Svg>
          <Signal />
          <Signal />
          <Svg w={16} h={27}><path fill="#fff" fillRule="evenodd" d="M5 0h6v3h3q2 0 2 2v20q0 2-2 2H2q-2 0-2-2V5q0-2 2-2h3ZM3 6v5h10V6Z" /></Svg>
        </StatusIcons>
        71%
      </StatusBar>

      <Header>
        <IconButton type="button" aria-label="Back">
          <Svg w={35} h={34} stroke={c.text} strokeWidth="4"><path d="M34 17H4M18 2L3 17L18 32" /></Svg>
        </IconButton>
        <Avatar>MH</Avatar>
        <Title>Mohanad Hassan</Title>
        <HeaderActions>
          <IconButton type="button" aria-label="Video call">
            <Svg w={42} h={34}><rect x="2" y="2" width="30" height="30" rx="2" stroke={c.text} strokeWidth="4" /><path fill={c.text} d="M33 14L42 7V27L33 20Z" /></Svg>
          </IconButton>
          <IconButton type="button" aria-label="Voice call">
            <Svg w={38} h={38} stroke={c.text} strokeWidth="4" strokeLinejoin="round"><path d="M2 2H11L13 10L7 16Q12 26 22 31L28 25L36 27V36Q22 36 12 26Q2 16 2 2Z" /></Svg>
          </IconButton>
          <IconButton type="button" aria-label="More options">
            <Svg w={17} h={34}><g fill={c.text}><circle cx="8" cy="4" r="4" /><circle cx="8" cy="17" r="4" /><circle cx="8" cy="30" r="4" /></g></Svg>
          </IconButton>
        </HeaderActions>
      </Header>

      <Chat>
        <Wallpaper />
        <Thread>
          <Notice $strong>Today</Notice>
          <Encryption>
            <Svg w={18} h={25} stroke={c.gold} strokeWidth="2"><rect x="1" y="9" width="16" height="15" rx="2" /><path d="M4 9V6a5 5 0 0 1 10 0V9" /><circle cx="9" cy="16" r="1" /></Svg>
            Messages and calls are end-to-end encrypted. Only people in this chat can read, listen to, or share them. Learn more.
          </Encryption>
          <Notice>Mohanad Hassan is a contact</Notice>

          <Message first arabic time="1:38 PM">السلام عليكم</Message>
          <Message out first arabic time="1:38 PM">وعليكم السلام</Message>
          <Message first arabic stack time="1:39 PM">كنت محتاج cv professional اقدر اقدم بيه علي وظايف</Message>
          <Message arabic time="1:40 PM">بس يكون بيعدي من ats</Message>
          <Message arabic time="1:40 PM">قولي أي تفاصيل محتاجها مني</Message>
          <Message out first arabic longQuote time="1:40 PM" quote="كنت محتاج cv professional اقدر اقدم بيه علي وظايف">تمام</Message>
          <Message out time="1:41 PM" quote="قولي أي تفاصيل محتاجها مني">{"Gmail\nTrainings\nSkills\nGraduation year"}</Message>
          <Message first arabic time="1:42 PM">تمام</Message>
          <Message time="1:42 PM"><Link href="mailto:mohand.h.khalil@gmail.com">mohand.h.khalil@gmail.com</Link></Message>
          <Message roomy time="1:43 PM">{"Trainings\nIT internship at Banque de Cairo\nTelecommunication Engineering at Nokia\nIT internship at Credit Agricola"}</Message>
          <Message time="1:46 PM">{"Skills\nSoftware : python, java, kotlin, js\nNetworks : TCP/IP, Cisco, RedHat\nTools : vs code, Ansible, terraform\nSoft skills: time management, team work, negotiations"}</Message>
          <Message time="1:46 PM">{"Graduation year :  2024"}</Message>
          <Message arabic time="1:47 PM">معلش هو الcost هتبقي كام</Message>
          <Message out first arabic time="1:47 PM" quote="معلش هو الcost هتبقي كام">خمسين جنيه</Message>
          <Message first arabic time="1:47 PM">تمام اوكي</Message>
          <Message arabic time="1:48 PM">أنا هستني منك يبقي جاهز و هحولك كاش</Message>
          <Message out first arabic time="1:48 PM">خلاص تمام</Message>
          <Message out arabic time="1:48 PM">اول ما هخلص هبعتلك</Message>
          <Message first arabic time="1:48 PM">خلاص تمام</Message>
          <Message out first arabic stack time="2:27 PM">معلش يا مهند كنت عايز اعرف اسم الجامعة والكلية</Message>
          <Message first time="2:29 PM">German University in Cairo <Link $bold href="tel:20192024">2019 - 2024</Link>{"\nBachelor of Information Engineering and Technology Grade: B+\nMajor: Networks"}</Message>
          <Reaction>👍</Reaction>

          <Row $out $first>
            <ForwardButton type="button" aria-label="Forward">
              <ForwardIcon w={42} h={30} color="#fff" />
            </ForwardButton>
            <Bubble $out $first $wide>
              <Tail out />
              <Forwarded><ForwardIcon w={28} h={20} color={c.muted} />Forwarded</Forwarded>
              <DocCard>
                <Preview>
                  <PreviewName>MOHANAD HASSAN</PreviewName>
                  <PreviewLink><a href="#gmail">Gmail</a> ⋄</PreviewLink>
                  <PreviewHead>OBJECTIVE</PreviewHead>
                  <PreviewBody>
                    <PreviewFullLine>Aspiring Junior Engineer with a solid foundation in networking, automation, and software development. Highly</PreviewFullLine>
                    analytical, collaborative, and eager to leverage my skills.
                  </PreviewBody>
                  <PreviewHead>EDUCATION</PreviewHead>
                  <PreviewLine><b>German University in Cairo</b><span>2019 - 2024</span></PreviewLine>
                  <PreviewLine><span>Bachelor of Information Engineering and Technology</span><span>Grade: B+</span></PreviewLine>
                  <PreviewLine>Major: Networks</PreviewLine>
                </Preview>
                <DocInfo>
                  <FileName>Mohanad_Hassan_CV.pdf</FileName>
                  <FileMeta>1 page • 70 kB • PDF</FileMeta>
                </DocInfo>
              </DocCard>
              <DocStamp><TimeStamp time="2:59 PM" out $bright /></DocStamp>
            </Bubble>
          </Row>

          <Message out arabic time="2:59 PM">تمام انا خلصت</Message>
          <Message first arabic time="3:22 PM">تمام ابعتلي رقم احولك عليه</Message>
          <Message out first time="3:25 PM"><Link $bold href="tel:01555011218">01555011218</Link></Message>
        </Thread>

        <Composer onSubmit={(e) => e.preventDefault()}>
          <Field>
            <IconButton type="button" aria-label="Stickers">
              <Svg w={42} h={42}>
                <path stroke={c.muted} strokeWidth="4" strokeLinejoin="round" d="M15 2H27Q40 2 40 15V24Q40 27 38 29L29 38Q27 40 24 40H15Q2 40 2 27V15Q2 2 15 2Z" />
                <path stroke={c.muted} strokeWidth="3" d="M23 40V32Q23 23 32 23H40" />
                <path fill={c.muted} d="M11 23H27Q22 25 22 31Q13 32 11 23Z" />
                <circle cx="14" cy="14" r="3" fill={c.muted} /><circle cx="28" cy="14" r="3" fill={c.muted} />
              </Svg>
            </IconButton>
            <InputWrap>
              <Input aria-label="Message" placeholder="Message" />
            </InputWrap>
            <FieldIcons>
              <IconButton type="button" aria-label="Attach">
                <Svg w={27} h={42} stroke={c.muted} strokeWidth="4" strokeLinecap="round"><path d="M25 10V28Q25 40 14 40Q2 40 2 28V11Q2 2 10 2Q18 2 18 11V27Q18 32 14 32Q10 32 10 27V11" /></Svg>
              </IconButton>
              <IconButton type="button" aria-label="Camera">
                <Svg w={42} h={38} stroke={c.muted} strokeWidth="4" strokeLinejoin="round"><path d="M2 6H11L15 2H27L31 6H40V36H2Z" /><circle cx="21" cy="21" r="7" /></Svg>
              </IconButton>
            </FieldIcons>
          </Field>
          <MicButton type="button" aria-label="Record voice message">
            <Svg w={29} h={41}>
              <rect x="8" y="0" width="13" height="26" rx="6" fill={c.bg} />
              <path d="M2 20Q3 31 14 31Q26 31 27 20M14 31V39" stroke={c.bg} strokeWidth="4" strokeLinecap="round" />
            </Svg>
          </MicButton>
        </Composer>
      </Chat>
      <NavBar />
    </Screen>
  );
}
